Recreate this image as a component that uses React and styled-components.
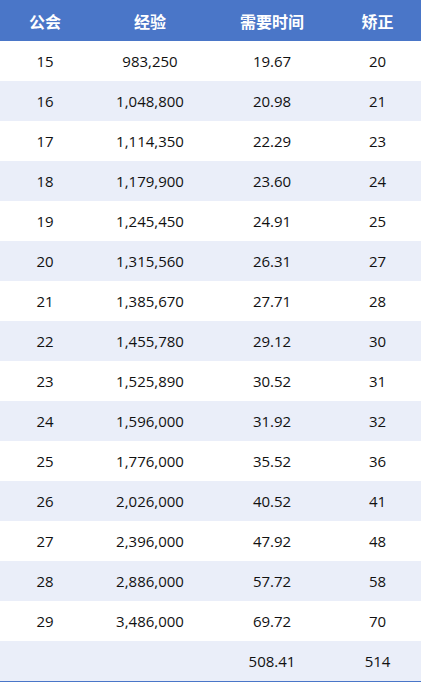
import React from 'react'
import styled, { createGlobalStyle } from 'styled-components'

const Global = createGlobalStyle`
  body {
    margin: 0;
    background: #fff;
    font-family: "Open Sans", "Noto Sans CJK SC", sans-serif;
  }
`

const Table = styled.table`
  width: 421px;
  border-collapse: collapse;
  table-layout: fixed;
  border-bottom: 2px solid #4a76c8;
`

const Head = styled.th`
  height: 41px;
  padding: 0;
  background: #4a76c8;
  color: #fff;
  font-family: "Noto Sans CJK SC", sans-serif;
  font-size: 16px;
  font-weight: 700;
  text-align: center;
  width: ${p => p.w}px;
`

const Row = styled.tr`
  background: ${p => (p.alt ? '#eaeef9' : '#fff')};
`

const Cell = styled.td`
  height: 40px;
  padding: 0;
  text-align: center;
  font-size: 15px;
  color: #111;
`

const rows = [
  ['15', '983,250', '19.67', '20'],
  ['16', '1,048,800', '20.98', '21'],
  ['17', '1,114,350', '22.29', '23'],
  ['18', '1,179,900', '23.60', '24'],
  ['19', '1,245,450', '24.91', '25'],
  ['20', '1,315,560', '26.31', '27'],
  ['21', '1,385,670', '27.71', '28'],
  ['22', '1,455,780', '29.12', '30'],
  ['23', '1,525,890', '30.52', '31'],
  ['24', '1,596,000', '31.92', '32'],
  ['25', '1,776,000', '35.52', '36'],
  ['26', '2,026,000', '40.52', '41'],
  ['27', '2,396,000', '47.92', '48'],
  ['28', '2,886,000', '57.72', '58'],
  ['29', '3,486,000', '69.72', '70'],
  ['', '', '508.41', '514'],
]

export default function App() {
  return (
    <>
      <Global />
      <Table>
        <thead>
          <tr>
            <Head w={90}>公会</Head>
            <Head w={120}>经验</Head>
            <Head w={124}>需要时间</Head>
            <Head w={87}>矫正</Head>
          </tr>
        </thead>
        <tbody>
          {rows.map((r, i) => (
            <Row key={i} alt={i % 2 === 1}>
              {r.map((c, j) => (
                <Cell key={j}>{c}</Cell>
              ))}
            </Row>
          ))}
        </tbody>
      </Table>
    </>
  )
}
